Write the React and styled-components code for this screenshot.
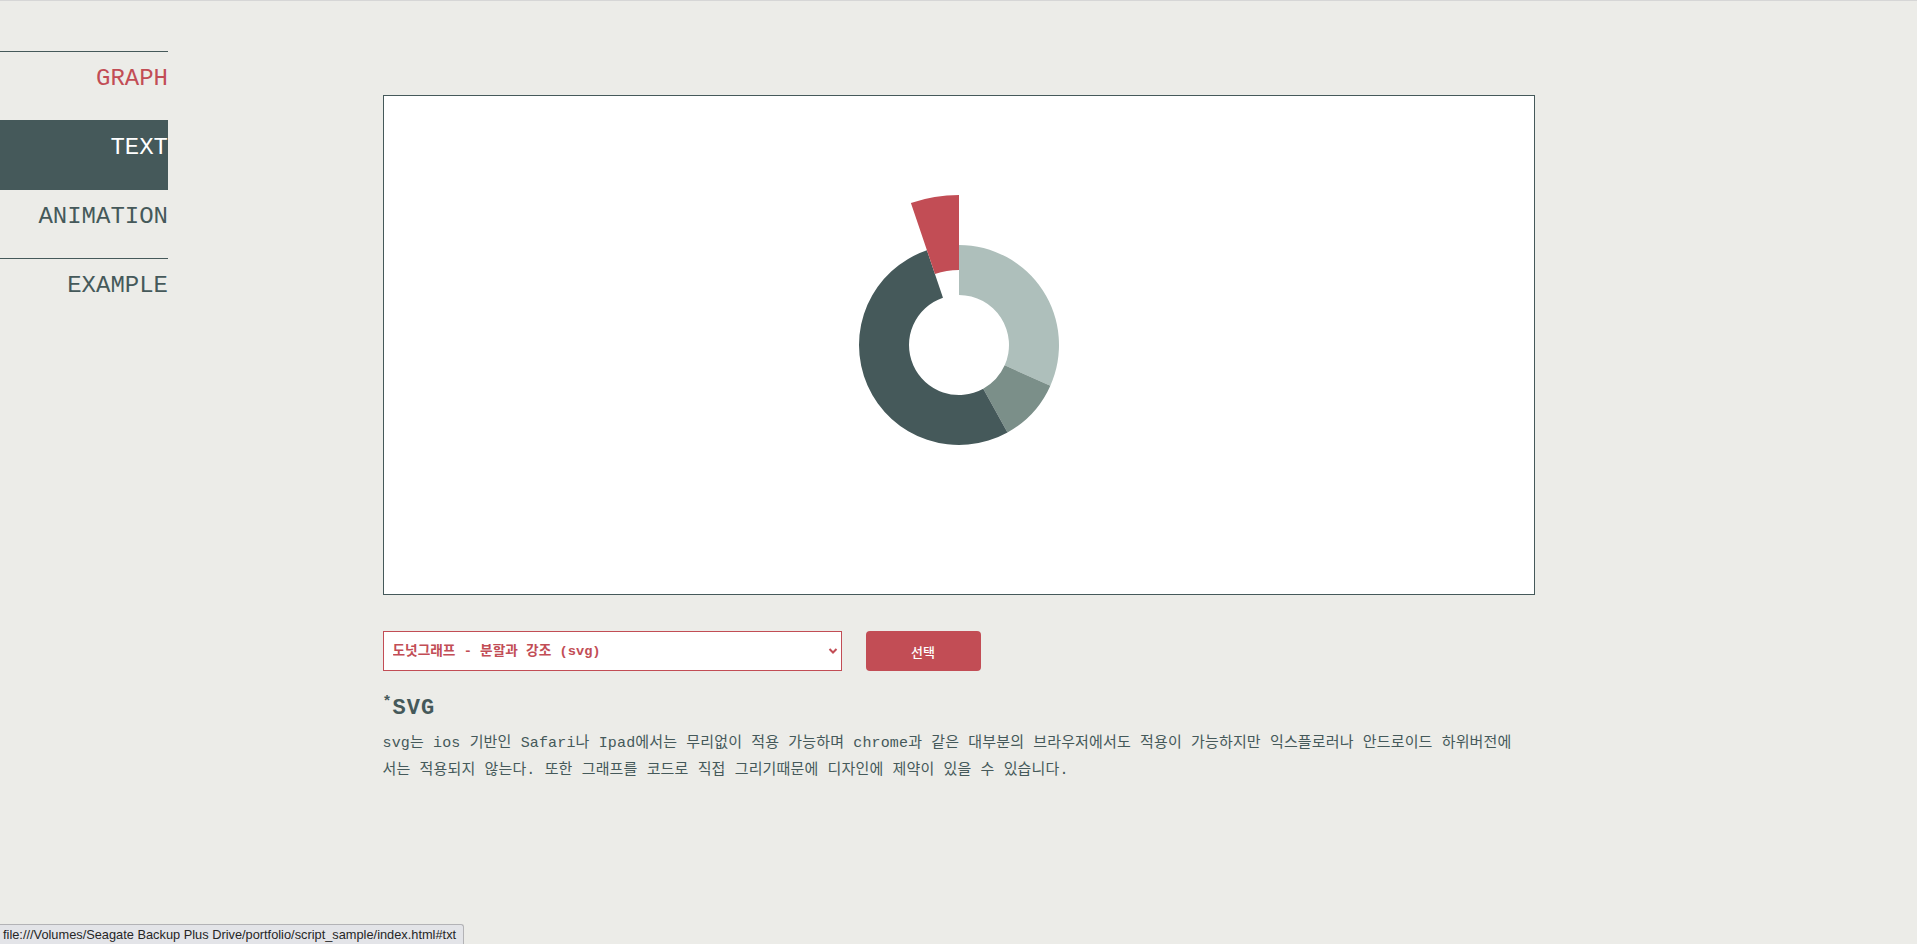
import React from "react";
import styled, { createGlobalStyle } from "styled-components";

const colors = {
  bg: "#ecece8",
  slate: "#45595a",
  red: "#c24d55",
  mid: "#7b8f89",
  light: "#aebfbb",
};

const GlobalStyle = createGlobalStyle`
  html, body {
    margin: 0;
    padding: 0;
    background: ${colors.bg};
  }
  body {
    border-top: 1px solid #d6d6d6;
    min-height: 943px;
    font-family: "Liberation Mono", "Noto Sans CJK KR", monospace;
  }
`;

const Page = styled.div`
  display: grid;
  grid-template-columns: 1fr 1152px 1fr;
  align-items: start;
`;

const Nav = styled.ul`
  list-style: none;
  margin: 50px 0 0;
  padding: 0;
  width: 168px;
`;

const NavItem = styled.li`
  box-sizing: border-box;
  height: 69px;
  padding-top: 12px;
  border-top: 1px solid ${colors.slate};
  text-align: right;
  font-size: 24px;
  line-height: 30px;
  background: ${(p) => (p.active ? colors.slate : "transparent")};
  color: ${(p) => (p.active ? "#fff" : p.hover ? colors.red : colors.slate)};
`;

const Main = styled.main`
  grid-column: 2;
  padding-top: 94px;
`;

const ChartBox = styled.div`
  box-sizing: border-box;
  height: 500px;
  border: 1px solid ${colors.slate};
  background: #fff;
  display: flex;
  align-items: center;
  justify-content: center;
`;

const Controls = styled.div`
  display: flex;
  gap: 24px;
  margin-top: 36px;
`;

const SelectWrap = styled.div`
  position: relative;
  width: 459px;
  height: 40px;
`;

const Select = styled.select`
  appearance: none;
  box-sizing: border-box;
  width: 100%;
  height: 100%;
  border: 1px solid ${colors.red};
  border-radius: 0;
  background: #fff;
  color: ${colors.red};
  padding: 0 24px 0 9px;
  font-family: "Liberation Mono", "Noto Sans CJK KR", monospace;
  font-size: 13.7px;
  font-weight: bold;
  outline: none;
`;

const Chevron = styled.svg`
  position: absolute;
  right: 4px;
  top: 16px;
  pointer-events: none;
`;

const Button = styled.button`
  width: 115px;
  height: 40px;
  border: none;
  border-radius: 4px;
  background: ${colors.red};
  color: #fff;
  font-family: "Noto Sans CJK KR", sans-serif;
  font-size: 13px;
  font-weight: 500;
`;

const Heading = styled.h3`
  margin: 17px 0 0;
  color: ${colors.slate};
  font-family: "Liberation Mono", monospace;
  font-size: 22px;
  line-height: 30px;
  font-weight: bold;
  letter-spacing: 1px;

  sup {
    font-size: 15px;
    letter-spacing: 0;
    margin-right: 1px;
  }
`;

const Desc = styled.p`
  margin: 6px 0 0;
  color: ${colors.slate};
  font-size: 15px;
  letter-spacing: 0.15px;
  line-height: 27px;
`;

const StatusBar = styled.div`
  position: fixed;
  left: 0;
  bottom: 0;
  box-sizing: border-box;
  height: 20px;
  width: 464px;
  padding: 0 0 0 3px;
  background: #e3e4e8;
  border: 1px solid #b3b3b6;
  border-left: none;
  border-bottom: none;
  border-top-right-radius: 3px;
  font-family: "Liberation Sans", Arial, sans-serif;
  font-size: 12.8px;
  line-height: 19px;
  color: #262626;
  white-space: nowrap;
`;

const segments = [
  { from: 0, to: 114, r0: 50, r1: 100, color: colors.light },
  { from: 114, to: 151, r0: 50, r1: 100, color: colors.mid },
  { from: 151, to: 341.3, r0: 50, r1: 100, color: colors.slate },
  { from: 341.3, to: 360, r0: 75, r1: 150, color: colors.red },
];

function pt(r, deg) {
  const a = (deg * Math.PI) / 180;
  return [150 + r * Math.sin(a), 150 - r * Math.cos(a)];
}

function arcPath({ from, to, r0, r1 }) {
  const large = to - from > 180 ? 1 : 0;
  const [x1, y1] = pt(r1, from);
  const [x2, y2] = pt(r1, to);
  const [x3, y3] = pt(r0, to);
  const [x4, y4] = pt(r0, from);
  return `M${x1} ${y1} A${r1} ${r1} 0 ${large} 1 ${x2} ${y2} L${x3} ${y3} A${r0} ${r0} 0 ${large} 0 ${x4} ${y4} Z`;
}

const Donut = () => (
  <svg width="300" height="300" viewBox="0 0 300 300">
    {segments.map((s, i) => (
      <path key={i} d={arcPath(s)} fill={s.color} />
    ))}
  </svg>
);

export default function App() {
  return (
    <>
      <GlobalStyle />
      <Page>
        <Nav>
          <NavItem hover>GRAPH</NavItem>
          <NavItem active>TEXT</NavItem>
          <NavItem>ANIMATION</NavItem>
          <NavItem>EXAMPLE</NavItem>
        </Nav>
        <Main>
          <ChartBox>
            <Donut />
          </ChartBox>
          <Controls>
            <SelectWrap>
              <Select defaultValue="donut">
                <option value="donut">도넛그래프 - 분할과 강조 (svg)</option>
              </Select>
              <Chevron width="10" height="8" viewBox="0 0 10 8">
                <path d="M1.5 2 L5 5.5 L8.5 2" fill="none" stroke={colors.red} strokeWidth="2" />
              </Chevron>
            </SelectWrap>
            <Button>선택</Button>
          </Controls>
          <Heading>
            <sup>*</sup>SVG
          </Heading>
          <Desc>
            svg는 ios 기반인 Safari나 Ipad에서는 무리없이 적용 가능하며 chrome과 같은 대부분의 브라우저에서도 적용이 가능하지만 익스플로러나 안드로이드 하위버전에
            <br />
            서는 적용되지 않는다. 또한 그래프를 코드로 직접 그리기때문에 디자인에 제약이 있을 수 있습니다.
          </Desc>
        </Main>
      </Page>
      <StatusBar>file:///Volumes/Seagate Backup Plus Drive/portfolio/script_sample/index.html#txt</StatusBar>
    </>
  );
}
